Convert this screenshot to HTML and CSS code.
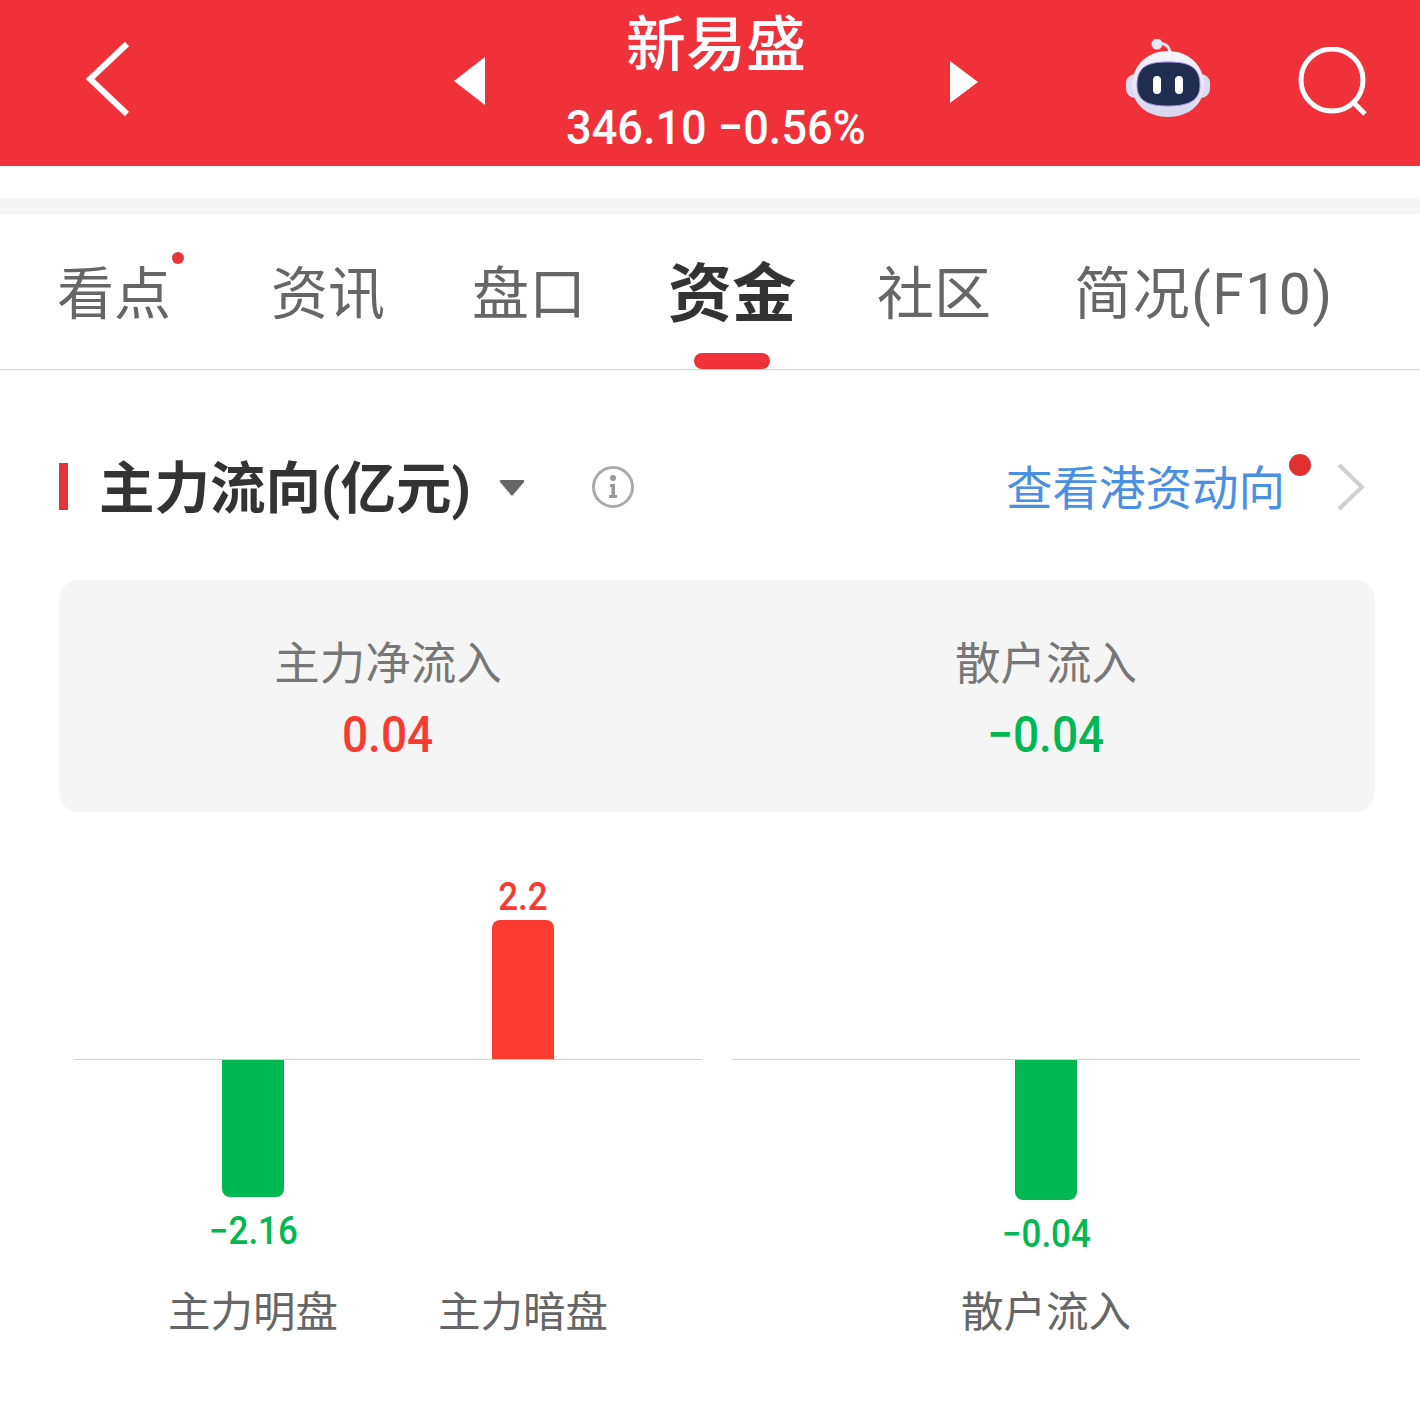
FILE: index.html
```html
<!DOCTYPE html>
<html lang="zh-CN">
<head>
    <meta charset="UTF-8">
    <meta name="viewport" content="width=device-width, initial-scale=1.0">
    <title>新易盛</title>
    <link rel="stylesheet" href="styles.css">
</head>
<body>
    <header class="top-bar">
        <svg class="back-icon" viewBox="0 0 44 76" width="44" height="76"><path d="M41 3 L4 38 L41 73" fill="none" stroke="#fff" stroke-width="6"/></svg>
        <svg class="prev-icon" viewBox="0 0 32 48" width="32" height="48"><path d="M31 0 V48 L0 24 Z" fill="#fff"/></svg>
        <div class="stock-title">
            <div class="stock-name">新易盛</div>
            <div class="stock-price"><span class="num-narrow">346.10 −0.56%</span></div>
        </div>
        <svg class="next-icon" viewBox="0 0 28 42" width="28" height="42"><path d="M0 0 V42 L28 21 Z" fill="#fff"/></svg>
        <svg class="robot-icon" viewBox="0 0 84 78" width="84" height="78">
            <defs>
                <linearGradient id="shell" x1="0" y1="0" x2="0" y2="1">
                    <stop offset="0" stop-color="#f6f6fc"/>
                    <stop offset="1" stop-color="#d6d6ec"/>
                </linearGradient>
            </defs>
            <path d="M31 5 C38 3 44 7 44 15" fill="none" stroke="#e6e6f2" stroke-width="3"/>
            <circle cx="31" cy="5" r="5.500" fill="#e6e6f4"/>
            <rect x="0" y="35" width="84" height="24" rx="9" fill="#dcdcf0"/>
            <path d="M42 12 C64 12 78 28 78 46 C78 66 62 78 42 78 C22 78 6 66 6 46 C6 28 20 12 42 12 Z" fill="url(#shell)"/>
            <path d="M42 23 C60 23 74 26 74 46 C74 62 62 67 42 67 C22 67 11 62 11 46 C11 26 24 23 42 23 Z" fill="#202d50" stroke="#a78be0" stroke-width="1"/>
            <rect x="27" y="37" width="8" height="18" rx="4" fill="#fff"/>
            <rect x="49" y="37" width="8" height="18" rx="4" fill="#fff"/>
        </svg>
        <svg class="search-icon" viewBox="0 0 70 70" width="70" height="70"><circle cx="34" cy="33" r="31" fill="none" stroke="#fff" stroke-width="5"/><path d="M56 56 L67 67" stroke="#fff" stroke-width="5"/></svg>
    </header>

    <div class="gray-strip"></div>

    <nav class="tabs">
        <div class="tab">看点<span class="tab-dot"></span></div>
        <div class="tab">资讯</div>
        <div class="tab">盘口</div>
        <div class="tab tab-active">资金</div>
        <div class="tab">社区</div>
        <div class="tab tab-wide">简况(F10)</div>
    </nav>

    <section class="flow-head">
        <div class="flow-title">主力流向(亿元)</div>
        <svg class="caret" viewBox="0 0 26 16" width="26" height="16"><path d="M2 0 H24 Q26 0 25 2 L14 15 Q13 16 12 15 L1 2 Q0 0 2 0 Z" fill="#666"/></svg>
        <svg class="info" viewBox="0 0 42 42" width="42" height="42">
            <circle cx="21" cy="21" r="19.500" fill="none" stroke="#aaa" stroke-width="3"/>
            <circle cx="21" cy="12" r="3" fill="#999"/>
            <path d="M18 18 H23 V29 H25 V32 H17 V29 H19.500 V21 H18 Z" fill="#999"/>
        </svg>
        <a class="hk-link">查看港资动向<span class="hk-dot"></span></a>
        <svg class="more" viewBox="0 0 28 48" width="28" height="48"><path d="M2 2 L25 24 L2 46" fill="none" stroke="#d0d0d0" stroke-width="4"/></svg>
    </section>

    <section class="summary">
        <div class="summary-item">
            <div class="summary-label">主力净流入</div>
            <div class="summary-value red"><span class="num-narrow">0.04</span></div>
        </div>
        <div class="summary-item">
            <div class="summary-label">散户流入</div>
            <div class="summary-value green"><span class="num-narrow">−0.04</span></div>
        </div>
    </section>

    <section class="charts">
        <div class="chart">
            <div class="chart-up">
                <div class="col"></div>
                <div class="col">
                    <div class="bar-value red"><span class="num-narrow">2.2</span></div>
                    <div class="bar bar-up" style="height: 139px"></div>
                </div>
            </div>
            <div class="chart-down">
                <div class="col">
                    <div class="bar bar-down" style="height: 137px"></div>
                    <div class="bar-value green"><span class="num-narrow">−2.16</span></div>
                </div>
                <div class="col"></div>
            </div>
            <div class="chart-names">
                <div class="col">主力明盘</div>
                <div class="col">主力暗盘</div>
            </div>
        </div>
        <div class="chart">
            <div class="chart-up">
                <div class="col"></div>
            </div>
            <div class="chart-down">
                <div class="col">
                    <div class="bar bar-down" style="height: 140px"></div>
                    <div class="bar-value green"><span class="num-narrow">−0.04</span></div>
                </div>
            </div>
            <div class="chart-names">
                <div class="col">散户流入</div>
            </div>
        </div>
    </section>
</body>
</html>
```

FILE: styles.css
```css
* {
    margin: 0;
    padding: 0;
    box-sizing: border-box;
}

body {
    font-family: Roboto, "Noto Sans CJK SC", sans-serif;
    background-color: #fff;
    color: #333;
}

.red {
    color: #f83a31;
}

.green {
    color: #00b853;
}

/* digits in the app are narrower than Roboto */
.num-narrow {
    display: inline-block;
    transform: scaleX(0.92);
    font-weight: 500;
    white-space: nowrap;
}

/* Top bar */
.top-bar {
    display: flex;
    align-items: center;
    height: 166px;
    padding-left: 86px;
    background-color: #f1313a;
    color: #fff;
}

.back-icon {
    margin-top: -8px;
}

.prev-icon {
    margin-left: 324px;
    margin-top: -4px;
}

.stock-title {
    width: 400px;
    margin-left: 30px;
    text-align: center;
}

.stock-name {
    font-size: 60px;
    font-weight: 500;
    line-height: 90px;
}

.stock-price {
    font-size: 49px;
    line-height: 74px;
}

.next-icon {
    margin-left: 34px;
    margin-top: -2px;
}

.robot-icon {
    margin-left: 148px;
    margin-top: -10px;
}

.search-icon {
    margin-left: 88px;
    margin-top: -2px;
}

.gray-strip {
    height: 16px;
    margin-top: 32px;
    background-color: #f5f5f5;
}

/* Tabs */
.tabs {
    display: grid;
    grid-template-columns: 228px 200px 202px 204px 200px 340px;
    align-items: center;
    height: 156px;
    border-bottom: 1px solid #d0d0d0;
}

.tab {
    position: relative;
    height: 155px;
    line-height: 161px;
    text-align: center;
    font-size: 57px;
    color: #666;
    white-space: nowrap;
}

.tab-wide {
    letter-spacing: 1.500px;
}

.tab-active {
    font-size: 64px;
    font-weight: 700;
    color: #333;
}

.tab-active::after {
    content: "";
    position: absolute;
    left: 64px;
    bottom: 0;
    width: 76px;
    height: 16px;
    border-radius: 8px;
    background-color: #f1313a;
}

.tab-dot {
    position: absolute;
    top: 38px;
    left: 172px;
    width: 12px;
    height: 12px;
    border-radius: 50%;
    background-color: #e8333a;
}

/* Section head */
.flow-head {
    display: flex;
    align-items: center;
    height: 56px;
    margin-top: 90px;
    padding-left: 59px;
}

.flow-title {
    height: 47px;
    margin-top: -3px;
    padding-left: 31px;
    border-left: 9px solid #e4353a;
    font-size: 55.500px;
    font-weight: 700;
    line-height: 54px;
    white-space: nowrap;
}

.caret {
    margin-left: 28px;
}

.info {
    margin-left: 67px;
    margin-top: -2px;
}

.hk-link {
    position: relative;
    margin-left: 372px;
    margin-top: 2px;
    font-size: 46.500px;
    line-height: 56px;
    color: #4a90e2;
    white-space: nowrap;
}

.hk-dot {
    position: absolute;
    top: -7px;
    right: -26px;
    width: 22px;
    height: 22px;
    border-radius: 50%;
    background-color: #e03030;
}

.more {
    margin-left: 52px;
    margin-top: -3px;
}

/* Summary card */
.summary {
    display: flex;
    height: 232px;
    margin: 64px 45px 0 59px;
    padding-top: 52px;
    border-radius: 20px;
    background-color: #f5f5f5;
}

.summary-item {
    flex: 1;
    text-align: center;
}

.summary-label {
    font-size: 45.500px;
    line-height: 66px;
    color: #777;
}

.summary-value {
    font-size: 50px;
    line-height: 74px;
}

/* Bar charts */
.charts {
    display: flex;
    gap: 30px;
    margin-top: 48px;
    padding-left: 74px;
}

.chart {
    width: 628px;
}

.chart-up,
.chart-down,
.chart-names {
    display: flex;
    padding: 0 44px;
}

.chart-up {
    height: 200px;
    align-items: flex-end;
    border-bottom: 1px solid #d0d0d0;
}

.chart-down {
    height: 223px;
}

.col {
    flex: 1;
    display: flex;
    flex-direction: column;
    align-items: center;
}

.bar {
    width: 62px;
}

.bar-up {
    border-radius: 8px 8px 0 0;
    background-color: #fd3b31;
}

.bar-down {
    border-radius: 0 0 8px 8px;
    background-color: #00b853;
}

.bar-down + .bar-value {
    margin-top: 11px;
}

.bar-value {
    font-size: 38px;
    line-height: 46px;
}

.chart-names {
    font-size: 42.500px;
    line-height: 60px;
    color: #666;
}
```
